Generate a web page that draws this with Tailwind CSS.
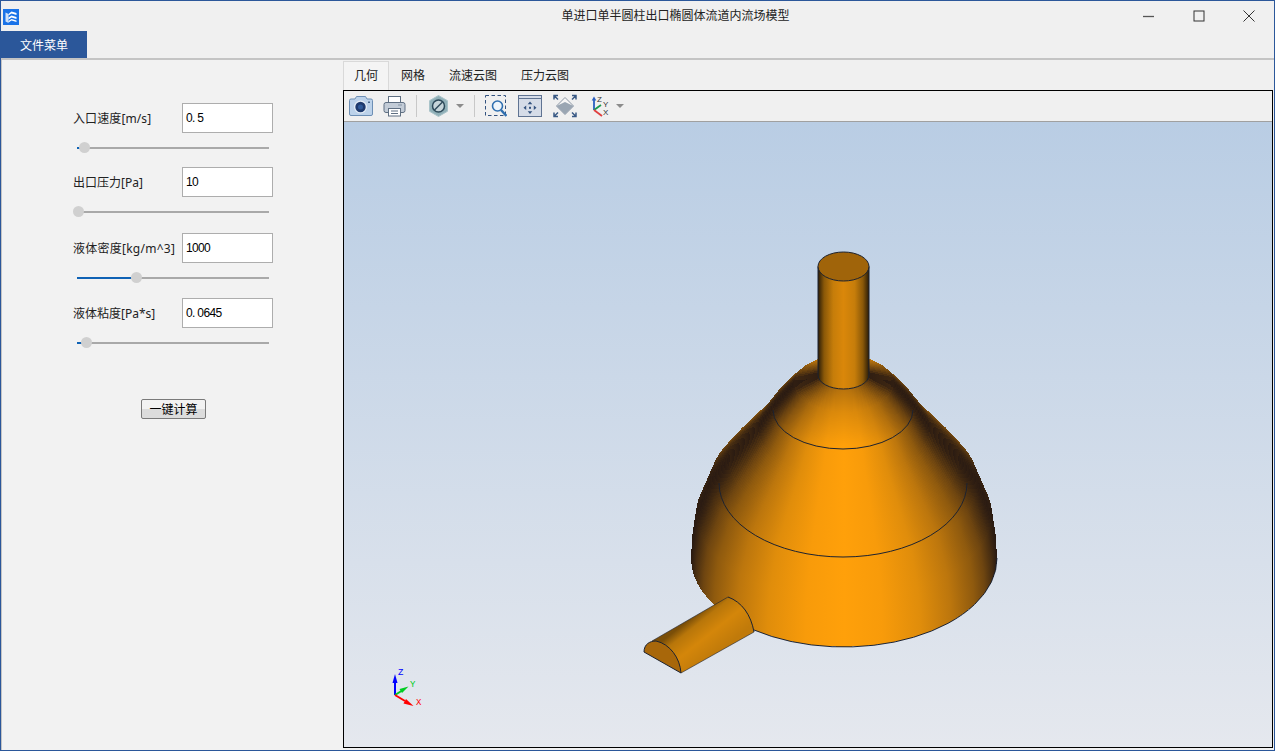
<!DOCTYPE html>
<html lang="en">
<head>
  <meta charset="UTF-8">
  <title>单进口单半圆柱出口椭圆体流道内流场模型</title>
  <script src="https://cdn.jsdelivr.net/npm/@tailwindcss/browser@4"></script>
</head>
<body class="bg-[#f0f0f0] overflow-hidden font-['Noto_Sans','Noto_Sans_CJK_SC',sans-serif] text-xs text-[#222]">
<div class="w-[1275px] h-[751px] flex flex-col border border-[#2b579a]">

  <!-- title bar -->
  <div class="h-[30px] flex items-center shrink-0">
    <svg class="ml-[2px] mt-[1px]" width="16" height="16" viewBox="0 0 16 16">
      <rect width="16" height="16" fill="#1a73e8"/>
      <path d="M2.500 3.500l3 1.500v9l-3-1.500z" fill="#cfe2fa"/>
      <path d="M5.500 5l3-2.500 5 1.500v2l-5-1.500-3 2zM5.500 8.500l3-2 5 1.500v2l-5-1.500-3 2zM5.500 12l3-2 5 1.500v1.500l-5-1.500-3 2z" fill="#fff"/>
    </svg>
    <div class="flex-1 text-center text-[12px] pl-[208px]">单进口单半圆柱出口椭圆体流道内流场模型</div>
    <div class="flex items-center">
      <div class="w-[50px] h-[30px] flex items-center justify-center">
        <svg width="12" height="12" viewBox="0 0 12 12"><path d="M0 6.500h11" stroke="#555" stroke-width="1.300"/></svg>
      </div>
      <div class="w-[50px] h-[30px] flex items-center justify-center">
        <svg width="12" height="12" viewBox="0 0 12 12"><rect x="1" y="1" width="10" height="10" fill="none" stroke="#333" stroke-width="1"/></svg>
      </div>
      <div class="w-[50px] h-[30px] flex items-center justify-center">
        <svg width="12" height="12" viewBox="0 0 12 12"><path d="M.5.500l11 11M11.500.500l-11 11" stroke="#333" stroke-width="1"/></svg>
      </div>
    </div>
  </div>

  <!-- menu -->
  <div class="h-[27px] shrink-0">
    <div class="w-[86px] h-full bg-[#2b579a] text-white flex items-center justify-center text-[12px] pt-[2px]">文件菜单</div>
  </div>

  <div class="flex-1 flex min-h-0 border-t-2 border-[#c4c4c4]">
    <!-- left form -->
    <div class="w-[342px] shrink-0 bg-[#f2f2f2] border-l border-[#c4c4c4] pt-[43px] pl-[71px]">
      <div class="flex items-center h-[30px]">
        <span class="w-[109px] pt-[1px] tracking-[0.1px]">入口速度[m/s]</span>
        <div class="w-[91px] h-full bg-white border border-[#adadad] flex items-center pl-[3px] font-['Liberation_Sans'] text-[12px] tracking-[-0.66px] text-black">0.&nbsp;5</div>
      </div>
      <div class="relative w-[192px] h-[11px] mt-[9px] ml-[4px] flex items-center">
        <div class="w-full h-[2px] bg-[#a9a9a9]"></div>
        <div class="absolute left-0 w-[3px] h-[2px] bg-[#0f62b5]"></div>
        <div class="absolute left-[2px] w-[11px] h-[11px] rounded-full bg-[#d0d0d0]"></div>
      </div>

      <div class="flex items-center h-[30px] mt-[14px]">
        <span class="w-[109px] pt-[1px]">出口压力[Pa]</span>
        <div class="w-[91px] h-full bg-white border border-[#adadad] flex items-center pl-[3px] font-['Liberation_Sans'] text-[12px] tracking-[-0.66px] text-black">10</div>
      </div>
      <div class="relative w-[192px] h-[11px] mt-[9px] ml-[4px] flex items-center">
        <div class="w-full h-[2px] bg-[#a9a9a9]"></div>
        <div class="absolute left-[-4px] w-[11px] h-[11px] rounded-full bg-[#d0d0d0]"></div>
      </div>

      <div class="flex items-center h-[30px] mt-[16px]">
        <span class="w-[109px] pt-[1px] tracking-[0.25px] whitespace-nowrap">液体密度[kg/m^3]</span>
        <div class="w-[91px] h-full bg-white border border-[#adadad] flex items-center pl-[3px] font-['Liberation_Sans'] text-[12px] tracking-[-0.66px] text-black">1000</div>
      </div>
      <div class="relative w-[192px] h-[11px] mt-[9px] ml-[4px] flex items-center">
        <div class="w-full h-[2px] bg-[#a9a9a9]"></div>
        <div class="absolute left-0 w-[54px] h-[2px] bg-[#0f62b5]"></div>
        <div class="absolute left-[54px] w-[11px] h-[11px] rounded-full bg-[#d0d0d0]"></div>
      </div>

      <div class="flex items-center h-[30px] mt-[15px]">
        <span class="w-[109px] pt-[1px]">液体粘度[Pa*s]</span>
        <div class="w-[91px] h-full bg-white border border-[#adadad] flex items-center pl-[3px] font-['Liberation_Sans'] text-[12px] tracking-[-0.66px] text-black">0.&nbsp;0645</div>
      </div>
      <div class="relative w-[192px] h-[11px] mt-[9px] ml-[4px] flex items-center">
        <div class="w-full h-[2px] bg-[#a9a9a9]"></div>
        <div class="absolute left-0 w-[5px] h-[2px] bg-[#0f62b5]"></div>
        <div class="absolute left-[4px] w-[11px] h-[11px] rounded-full bg-[#d0d0d0]"></div>
      </div>

      <div class="w-[65px] h-[20px] mt-[51px] ml-[68px] pt-[1px] border border-[#7a7a7a] rounded-[2px] bg-gradient-to-b from-[#f2f2f2] from-50% to-[#dcdcdc] to-50% flex items-center justify-center text-[12px] text-black">一键计算</div>
    </div>

    <!-- right side -->
    <div class="flex-1 flex flex-col min-w-0">
      <div class="h-[30px] shrink-0 flex items-end">
        <div class="w-[46px] h-[29px] bg-[#f4f4f4] border border-b-0 border-[#d9d9d9] flex items-center justify-center">几何</div>
        <div class="ml-[12px] w-[36px] h-[29px] flex items-center">网格</div>
        <div class="ml-[12px] w-[60px] h-[29px] flex items-center">流速云图</div>
        <div class="ml-[12px] w-[60px] h-[29px] flex items-center">压力云图</div>
      </div>
      <div class="flex-1 flex flex-col min-h-0 border border-black mr-[1px] mb-[2px]">
        <!-- toolbar -->
        <div class="h-[31px] shrink-0 flex items-center border-b border-[#a0a0a0] pl-[5px]">
          <svg width="24" height="24" viewBox="0 0 24 24" class="mr-[10px]">
            <path d="M2 5h4l1.500-2.500h9L18 5h4a1.500 1.500 0 0 1 1.500 1.500V20a1.500 1.500 0 0 1-1.500 1.500H2A1.500 1.500 0 0 1 .5 20V6.500A1.500 1.500 0 0 1 2 5z" fill="#bcd2ea" stroke="#6d8fb5"/>
            <circle cx="11.500" cy="13" r="6.500" fill="#e6eef7"/>
            <circle cx="11.500" cy="13" r="5.200" fill="#1e3a6e"/>
            <circle cx="11.500" cy="13" r="2.500" fill="#2f5a9a"/>
            <rect x="19" y="7.500" width="2" height="1.500" fill="#4a6a90"/>
          </svg>
          <svg width="23" height="24" viewBox="0 0 23 24" class="mr-[10px]">
            <rect x="5.500" y="2.500" width="12" height="6" fill="#fff" stroke="#5f6f82"/>
            <path d="M3 8.500h17a2 2 0 0 1 2 2v6a2 2 0 0 1-2 2H3a2 2 0 0 1-2-2v-6a2 2 0 0 1 2-2z" fill="#c3ccd7" stroke="#5f6f82"/>
            <path d="M15 11h4" stroke="#8696a8"/>
            <rect x="5.500" y="14.500" width="12" height="7.500" fill="#fff" stroke="#5f6f82"/>
            <path d="M8 17h7M8 19.500h7" stroke="#5f6f82"/>
          </svg>
          <div class="w-px h-[22px] bg-[#c8c8c8] mr-[11px]"></div>
          <svg width="21" height="24" viewBox="0 0 21 24" class="mr-[7px]">
            <path d="M10.500 1.500l9 5.200v10.600l-9 5.200-9-5.200V6.700z" fill="#90b0b8" stroke="#a9c3c9"/>
            <circle cx="10.500" cy="12" r="6" fill="#c6d5da" stroke="#2d4a5a" stroke-width="1.500"/>
            <path d="M6.500 16l8-8" stroke="#2d4a5a" stroke-width="1.500"/>
          </svg>
          <svg width="8" height="4" viewBox="0 0 8 4" class="mr-[10px]"><path d="M0 0h8l-4 4z" fill="#8c8c8c"/></svg>
          <div class="w-px h-[22px] bg-[#c8c8c8] mr-[10px]"></div>
          <svg width="22" height="22" viewBox="0 0 22 22" class="mr-[11px]">
            <rect x=".5" y=".5" width="20" height="20" fill="none" stroke="#33527f" stroke-dasharray="3.500 2.500"/>
            <circle cx="12.500" cy="11" r="5" fill="#eef5fb" stroke="#2f6fb0" stroke-width="1.600"/>
            <path d="M16 15l5.500 6" stroke="#2f6fb0" stroke-width="2.500"/>
          </svg>
          <svg width="24" height="22" viewBox="0 0 24 22" class="mr-[11px]">
            <rect x=".5" y=".5" width="23" height="21" fill="#d5dce8" stroke="#5f7392"/>
            <path d="M1 3.500h22" stroke="#5f7392"/>
            <path d="M12 6.500l2.300 2.700h-4.600zM12 19l2.300-2.700h-4.600zM5.500 12.800l2.700-2.300v4.600zM18.500 12.800l-2.700-2.300v4.600z" fill="#33527f"/>
            <rect x="11" y="11.800" width="2" height="2" fill="#33527f"/>
          </svg>
          <svg width="24" height="24" viewBox="0 0 24 24" class="mr-[13px]">
            <path d="M12 3.500L20.500 12 12 20.500 3.500 12z" fill="#f6f6f6" stroke="#8a95a3"/>
            <path d="M3.500 12L12 20.500 20.500 12 12 8z" fill="#9aa6b3"/>
            <path d="M1 5.500V1.500h4M1.500 2l3.500 3.500M23 5.500V1.500h-4M22.500 2L19 5.500M1 18.500v4h4M1.500 22L5 18.500M23 18.500v4h-4M22.500 22L19 18.500" fill="none" stroke="#3a5a85" stroke-width="1.500"/>
          </svg>
          <svg width="22" height="24" viewBox="0 0 22 24" class="mr-[4px]">
            <path d="M4 16V5" stroke="#2a5fc0" stroke-width="1.800"/>
            <path d="M4 2.500l-2.300 4h4.600z" fill="#2a5fc0"/>
            <path d="M4 16l7-5" stroke="#1a9a50" stroke-width="1.800"/>
            <path d="M4 16l8 6" stroke="#e04040" stroke-width="1.800"/>
            <text x="7" y="8" font-size="8" fill="#333" font-family="Liberation Sans">Z</text>
            <text x="13" y="13" font-size="8" fill="#333" font-family="Liberation Sans">Y</text>
            <text x="13" y="21" font-size="8" fill="#333" font-family="Liberation Sans">X</text>
          </svg>
          <svg width="8" height="4" viewBox="0 0 8 4"><path d="M0 0h8l-4 4z" fill="#8c8c8c"/></svg>
        </div>

        <!-- 3d view -->
        <svg class="flex-1 min-h-0 block w-full" viewBox="344 122 928 625" preserveAspectRatio="xMinYMin slice">
          <defs>
            <linearGradient id="bg" x1="0" y1="0" x2="0" y2="1">
              <stop offset="0" stop-color="#b9cde4"/><stop offset="1" stop-color="#e5e8ee"/>
            </linearGradient>
            <linearGradient id="cyl" x1="0" y1="0" x2="1" y2="0">
              <stop offset="0" stop-color="#2a1c08"/><stop offset=".12" stop-color="#8a5808"/>
              <stop offset=".3" stop-color="#c67d0a"/><stop offset=".5" stop-color="#da870a"/>
              <stop offset=".72" stop-color="#c67d0a"/><stop offset=".88" stop-color="#8a5808"/>
              <stop offset="1" stop-color="#2a1c08"/>
            </linearGradient>
            <linearGradient id="pipe" gradientUnits="userSpaceOnUse" x1="690" y1="619" x2="717" y2="653">
              <stop offset="0" stop-color="#7a4e08"/><stop offset=".2" stop-color="#b8760a"/>
              <stop offset=".55" stop-color="#d4860a"/><stop offset="1" stop-color="#c07a0a"/>
            </linearGradient>
          </defs>
          <rect x="344" y="122" width="928" height="625" fill="url(#bg)"/>
          <g id="body" shape-rendering="crispEdges"></g>
          <g fill="none" stroke="#1c2230" stroke-width="1">
            <path d="M754 630A153 88.740 0 0 0 997 558"/>
            <path d="M719 483A124 74 0 0 0 967 483"/>
            <path d="M773 410A70 39 0 0 0 913 410"/>
          </g>
          <!-- outlet cylinder -->
          <path d="M818 266.500V375A25.500 14 0 0 0 869 375V266.500z" fill="url(#cyl)" stroke="#1c2230"/>
          <ellipse cx="843.500" cy="266.500" rx="25.500" ry="14.500" fill="#a0640a" stroke="#1c2230"/>
          <!-- inlet half pipe -->
          <path d="M652 641L728 597C742 602 751 615 754 632L681 673z" fill="url(#pipe)"/>
          <path d="M652 641L728 597M681 673L754 632" fill="none" stroke="#1c2230" stroke-width=".6"/>
          <path d="M728 597C742 602 751 615 754 632" fill="none" stroke="#1c2230"/>
          <path d="M644 652C644 644 650 641 656 641C670 644 680 658 681 673z" fill="#a8670a" stroke="#1c2230"/>
          <!-- axis triad -->
          <path d="M395 695V680" stroke="#0000ff" stroke-width="2"/><path d="M395 674l-2.500 9h5z" fill="#0000ff"/>
          <path d="M395 695l8-5" stroke="#00cc22" stroke-width="2"/><path d="M408.500 686.500l-9 2.500 2.500 4z" fill="#00cc22"/>
          <path d="M395 695l10 6" stroke="#ff0000" stroke-width="2"/><path d="M413.500 706l-10-2.500 2.500-4.500z" fill="#ff0000"/>
          <text x="398" y="675" font-size="9" fill="#0000ff" font-family="Liberation Mono">Z</text>
          <text x="410" y="687" font-size="9" fill="#00cc22" font-family="Liberation Mono">Y</text>
          <text x="416" y="705" font-size="9" fill="#ff0000" font-family="Liberation Mono">X</text>
        </svg>
      </div>
    </div>
  </div>
</div>
<script>
  // body of revolution: stack of flat rings, bottom to top
  const profile = [[153,558],[152,540],[148,515],[134,482],[116,460],[86,427],[70,405],[60,394],[50,384],[25,375]];
  const U = [-1,-.97,-.92,-.85,-.7,-.5,-.25,0,.25,.5,.7,.85,.92,.97,1];
  let html = '', id = 0;
  for (let i = 0; i < profile.length - 1; i++) {
    const [r0, y0] = profile[i], [r1, y1] = profile[i + 1];
    for (let s = 0; s < 24; s++) {
      const t = s / 24, rx = r0 + (r1 - r0) * t, cy = y0 + (y1 - y0) * t;
      const f = 0.72 + 0.28 * Math.min(1, (rx - 25) / 45);
      const stops = U.map(u => {
        const c = Math.max(Math.pow(1 - u * u, 0.45) * f, 0.16);
        return `<stop offset="${(u + 1) / 2}" stop-color="rgb(${Math.round(255 * c)},${Math.round(160 * c)},${Math.round(10 + 10 * (1 - c))})"/>`;
      }).join('');
      html += `<linearGradient id="r${id}">${stops}</linearGradient>`;
      html += `<ellipse cx="844" cy="${cy}" rx="${rx}" ry="${rx * 0.58}" fill="url(#r${id})"/>`;
      id++;
    }
  }
  document.getElementById('body').innerHTML = html;
</script>
</body>
</html>
